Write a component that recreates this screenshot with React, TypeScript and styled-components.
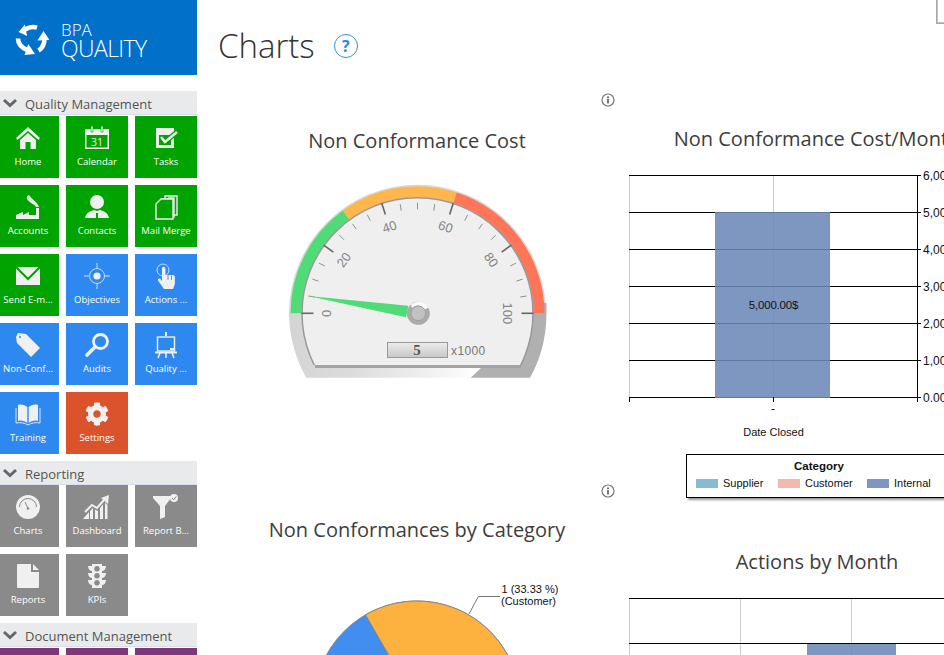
import React from "react";
import styled, { createGlobalStyle } from "styled-components";
import { FaCog } from "react-icons/fa";

const Global = createGlobalStyle`
  html, body { margin: 0; padding: 0; background: #fff; overflow: hidden; }
  #root { width: 944px; height: 655px; overflow: hidden; }
  * { box-sizing: border-box; }
`;

const Page = styled.div`
  position: relative;
  display: flex;
  width: 944px;
  height: 655px;
  overflow: hidden;
  font-family: "Open Sans", "Noto Sans", sans-serif;
`;
const CornerBox = styled.div`
  position: absolute;
  top: -2px;
  left: 936px;
  width: 20px;
  height: 26px;
  border: 1px solid #a8a8a8;
  box-shadow: inset 0 0 0 1px #c4c4c4;
`;
const Sidebar = styled.aside`
  flex: 0 0 197px;
  width: 197px;
  height: 655px;
  overflow: hidden;
`;
const Logo = styled.div`
  height: 75px;
  background: #0070c9;
  display: flex;
  align-items: center;
  padding-left: 15px;
  gap: 12px;
  color: #fff;
  margin-bottom: 16px;
`;
const LogoText = styled.div`
  display: flex;
  flex-direction: column;
  font-weight: 300;
  margin-top: 5px;
`;
const LogoTop = styled.span`
  font-size: 17px;
  line-height: 16px;
`;
const LogoBottom = styled.span`
  font-size: 23px;
  line-height: 20px;
  letter-spacing: -0.6px;
`;
const SectionHead = styled.div<{ $flush?: boolean }>`
  height: 24px;
  background: #e9eaec;
  border-bottom: 1px solid #dcdcf0;
  display: flex;
  align-items: center;
  padding-left: 2px;
  gap: 7px;
  margin-bottom: ${(p) => (p.$flush ? 0 : 1)}px;
  font-size: 13px;
  color: #555;
`;
const SectionName = styled.span`
  padding-top: 2px;
`;
const TileGrid = styled.div`
  display: grid;
  grid-template-columns: repeat(3, 62px);
  grid-auto-rows: 62px;
  gap: 7px;
  margin-left: -3px;
  margin-bottom: 7px;
`;
const Tile = styled.div<{ $tone: string }>`
  --tile: ${(p) => p.$tone};
  background: var(--tile);
  display: flex;
  flex-direction: column;
  align-items: center;
  padding-top: 8px;
  color: #f0f0f0;
`;
const IconSlot = styled.div`
  width: 28px;
  height: 28px;
  display: flex;
  align-items: center;
  justify-content: center;
`;
const TileLabel = styled.span`
  margin-top: 3px;
  font-size: 9.5px;
  line-height: 14px;
  white-space: nowrap;
  color: #fff;
`;
const Main = styled.main`
  flex: 1;
  min-width: 0;
  height: 655px;
  overflow: hidden;
  padding-left: 20px;
`;
const Header = styled.header`
  height: 75px;
  display: flex;
  align-items: center;
  padding: 17px 0 0 1px;
  gap: 19px;
`;
const PageTitle = styled.h1`
  margin: 0;
  font-size: 33px;
  line-height: 40px;
  font-weight: 300;
  color: #333;
`;
const Help = styled.div`
  width: 24px;
  height: 24px;
  border: 1.5px solid #3a8fd8;
  border-radius: 50%;
  display: flex;
  align-items: center;
  justify-content: center;
  color: #2f86d2;
  font-size: 16px;
  font-weight: 700;
`;
const Columns = styled.div`
  display: flex;
  width: 800px;
`;
const Column = styled.div`
  flex: 0 0 400px;
  width: 400px;
`;
const Card = styled.section<{ $height?: number }>`
  height: ${(p) => (p.$height ? `${p.$height}px` : "auto")};
`;
const InfoRow = styled.div`
  display: flex;
  justify-content: flex-end;
  padding: 18px 2px 0 0;
  height: 32px;
  color: #777;
`;
const ChartTitle = styled.h2<{ $top: number }>`
  margin: ${(p) => p.$top}px 0 0;
  font-size: 20px;
  line-height: 30px;
  font-weight: 400;
  text-align: center;
  white-space: nowrap;
  color: #3d3d3d;
`;
const ChartSvg = styled.svg<{ $top: number; $h: number }>`
  display: block;
  width: 400px;
  height: ${(p) => p.$h}px;
  margin-top: ${(p) => p.$top}px;
  font-family: "Liberation Sans", Arial, sans-serif;
`;
const Legend = styled.div`
  margin: 9px 0 0 69px;
  width: 266px;
  height: 44px;
  border: 1px solid #000;
  box-shadow: 2px 2px 2px #999;
  font-family: "Liberation Sans", Arial, sans-serif;
  font-size: 11px;
  color: #111;
  padding-top: 4px;
`;
const LegendTitle = styled.div`
  font-weight: 700;
  font-size: 11.5px;
  text-align: center;
  line-height: 14px;
  margin-bottom: 3px;
`;
const LegendItems = styled.div`
  display: flex;
  padding-left: 9px;
`;
const LegendItem = styled.div<{ $w: number }>`
  display: flex;
  align-items: center;
  gap: 5px;
  width: ${(p) => p.$w}px;
  line-height: 14px;
`;
const Swatch = styled.span<{ $c: string }>`
  width: 22px;
  height: 9px;
  background: ${(p) => p.$c};
`;

const W = "#f0f0f0";
const icons: Record<string, React.ReactNode> = {
  home: (
    <svg width="28" height="28" viewBox="0 0 28 28" fill={W}>
      <path d="M14 3 L26 14 L24.5 16 L14 7 L3.5 16 L2 14 Z" />
      <path d="M6 16 L14 9 L22 16 V25 H16.5 V18 H11.5 V25 H6 Z" />
    </svg>
  ),
  calendar: (
    <svg width="28" height="28" viewBox="0 0 28 28">
      <path fillRule="evenodd" fill={W} d="M2 5H26V25H2Z M3.5 11H24.5V23.5H3.5Z" />
      <rect x="8" y="2" width="2" height="6" fill={W} stroke="var(--tile)" strokeWidth=".6" />
      <rect x="18" y="2" width="2" height="6" fill={W} stroke="var(--tile)" strokeWidth=".6" />
      <text x="14" y="21.5" textAnchor="middle" fontSize="10.5" fill={W} fontFamily="Open Sans">31</text>
    </svg>
  ),
  tasks: (
    <svg width="28" height="28" viewBox="0 0 28 28">
      <path fillRule="evenodd" fill={W} d="M4 4H22V24H4Z M7 11H19V21H7Z" />
      <path d="M9 13 L13 18 L25 8" fill="none" stroke="var(--tile)" strokeWidth="5" />
      <path d="M9 13 L13 18 L25 8" fill="none" stroke={W} strokeWidth="2.4" />
    </svg>
  ),
  accounts: (
    <svg width="28" height="28" viewBox="0 0 28 28" fill={W}>
      <path d="M2 26 V22 L9 19 V22 L15 19 V22 H22 V15 H25 V26 Z" />
      <path d="M22 14 C21 11 15 10 13 6 C12 3 15 1 16 3 C17 6 23 8 25 14 Z" />
    </svg>
  ),
  contacts: (
    <svg width="28" height="28" viewBox="0 0 28 28" fill={W}>
      <circle cx="14" cy="9" r="7" />
      <path d="M2 25 C3 20 7 18 11 17 L14 18 L17 17 C21 18 25 20 26 25 Z" />
      <rect x="13" y="20" width="2" height="5" fill="var(--tile)" />
    </svg>
  ),
  merge: (
    <svg width="28" height="28" viewBox="0 0 28 28" fill="none" stroke={W} strokeWidth="1.4">
      <path d="M13 5 V3 H25 V22 H22" />
      <path d="M9 6 H17 V5 H22 V24 H17" />
      <path d="M4 11 L9 6 H21 V26 H4 Z" fill="var(--tile)" />
    </svg>
  ),
  mail: (
    <svg width="28" height="28" viewBox="0 0 28 28">
      <rect x="2" y="5" width="24" height="18" fill={W} />
      <path d="M2 5 L14 17 L26 5" fill="none" stroke="var(--tile)" strokeWidth="2" />
    </svg>
  ),
  objectives: (
    <svg width="28" height="28" viewBox="0 0 28 28" fill="none" stroke="#c7ddf9" strokeWidth="1">
      <circle cx="14" cy="14" r="7.5" />
      <circle cx="14" cy="14" r="3.6" fill={W} stroke="none" />
      <path d="M14 1 V7 M14 21 V27 M1 14 H7 M21 14 H27" />
    </svg>
  ),
  actions: (
    <svg width="28" height="28" viewBox="0 0 28 28">
      <circle cx="11" cy="8" r="6" fill="none" stroke="#c7ddf9" strokeWidth="1" />
      <path fill={W} d="M10 6.5 a1.7 1.7 0 0 1 3.4 0 V13 h7.5 c1.5 0 2 1 2 2.5 V22 L21 27 H12 L6 18.5 C5.5 17 7 16 8.5 17 L10 19 Z" />
      <path d="M16 13 V18 M19.5 13.5 V18" stroke="var(--tile)" strokeWidth=".8" />
    </svg>
  ),
  tag: (
    <svg width="28" height="28" viewBox="0 0 28 28" fill={W}>
      <path d="M2 6 L4 2 L12 3 L26 17 L17 26 L3 12 Z" />
      <circle cx="6" cy="6" r="1" fill="var(--tile)" />
    </svg>
  ),
  audits: (
    <svg width="28" height="28" viewBox="0 0 28 28" fill="none" stroke={W}>
      <circle cx="17.5" cy="10.5" r="7" strokeWidth="2.8" />
      <path d="M12 16 L4 24" strokeWidth="3.6" strokeLinecap="round" />
    </svg>
  ),
  easel: (
    <svg width="28" height="28" viewBox="0 0 28 28" fill="none" stroke={W}>
      <path d="M14 1 V5" strokeWidth="2" />
      <rect x="5.5" y="6" width="17" height="14" strokeWidth="1.4" />
      <rect x="18" y="17" width="4" height="2" fill={W} stroke="none" />
      <path d="M3 21.5 H25" strokeWidth="2" />
      <path d="M8 22 L6 27 M14 22 V27 M20 22 L22 27" strokeWidth="1.5" />
    </svg>
  ),
  book: (
    <svg width="28" height="28" viewBox="0 0 28 28">
      <path fill={W} d="M13.3 7 C11 5 7 4 4 5 V21 C7 20 11 21 13.3 23 Z" />
      <path fill={W} d="M14.7 7 C17 5 21 4 24 5 V21 C21 20 17 21 14.7 23 Z" />
      <path fill="none" stroke={W} strokeWidth=".9" d="M2 8 V23 C6 22 11 23 14 25 C17 23 22 22 26 23 V8" />
    </svg>
  ),
  gear: <FaCog size={24} color={W} />,
  gauge: (
    <svg width="28" height="28" viewBox="0 0 28 28">
      <circle cx="14" cy="14" r="12" fill={W} />
      <path d="M5.5 14 A8.5 8.5 0 0 1 22.5 14" fill="none" stroke="var(--tile)" strokeWidth="1" />
      <path d="M11 9 L14 15.5" stroke="var(--tile)" strokeWidth="1" />
      <circle cx="14" cy="15.5" r="1.3" fill="var(--tile)" />
    </svg>
  ),
  dashboard: (
    <svg width="28" height="28" viewBox="0 0 28 28" fill={W}>
      <path d="M2 19 L9 12 L14 15 L21 7" fill="none" stroke={W} strokeWidth="2" />
      <path d="M26 2 L25 11 L18 5 Z" />
      <path d="M0 26 L6 19 V26 Z M7 26 V18 L10 15 V26 Z M12 26 V16.5 L15 18 V26 Z M17 26 V15 L20 11.5 V26 Z M22 26 V9.5 L24.5 12 V26 Z" />
    </svg>
  ),
  funnel: (
    <svg width="28" height="28" viewBox="0 0 28 28" fill={W}>
      <path d="M1 3 H19 V5 L13 13 V24 L8 26 V13 L1 5 Z" />
      <circle cx="22" cy="5" r="4" />
      <path d="M20 5 L21.7 6.8 L24.2 3.4" fill="none" stroke="var(--tile)" strokeWidth="1" />
    </svg>
  ),
  report: (
    <svg width="28" height="28" viewBox="0 0 28 28" fill={W}>
      <path d="M3 3 Q3 2 4 2 H17 V10 H25 V25 Q25 26 24 26 H4 Q3 26 3 25 Z" />
      <path d="M19 2 L25 8 H19 Z" />
    </svg>
  ),
  kpi: (
    <svg width="28" height="28" viewBox="0 0 28 28">
      <path fillRule="evenodd" fill={W} d="M9 2 H19 V4 L23 4 C23 7 21 9 19 9 V11 H23 C23 14 21 16 19 16 V18 H23 C23 21 21 23 19 23 V26 H9 V23 C7 23 5 21 5 18 H9 V16 C7 16 5 14 5 11 H9 V9 C7 9 5 7 5 4 H9 Z M14 4 a2.8 2.8 0 1 0 .01 0 Z M14 11 a2.8 2.8 0 1 0 .01 0 Z M14 18 a2.8 2.8 0 1 0 .01 0 Z" />
    </svg>
  ),
};

type T = { label: string; icon: string; tone: string };
const G = "#00a300";
const B = "#2d89ef";
const O = "#da532c";
const S = "#8a8a8a";
const P = "#7e3878";
const quality: T[] = [
  { label: "Home", icon: "home", tone: G },
  { label: "Calendar", icon: "calendar", tone: G },
  { label: "Tasks", icon: "tasks", tone: G },
  { label: "Accounts", icon: "accounts", tone: G },
  { label: "Contacts", icon: "contacts", tone: G },
  { label: "Mail Merge", icon: "merge", tone: G },
  { label: "Send E-m...", icon: "mail", tone: G },
  { label: "Objectives", icon: "objectives", tone: B },
  { label: "Actions ...", icon: "actions", tone: B },
  { label: "Non-Conf...", icon: "tag", tone: B },
  { label: "Audits", icon: "audits", tone: B },
  { label: "Quality ...", icon: "easel", tone: B },
  { label: "Training", icon: "book", tone: B },
  { label: "Settings", icon: "gear", tone: O },
];
const reporting: T[] = [
  { label: "Charts", icon: "gauge", tone: S },
  { label: "Dashboard", icon: "dashboard", tone: S },
  { label: "Report B...", icon: "funnel", tone: S },
  { label: "Reports", icon: "report", tone: S },
  { label: "KPIs", icon: "kpi", tone: S },
];
const documents: T[] = [
  { label: "", icon: "", tone: P },
  { label: "", icon: "", tone: P },
  { label: "", icon: "", tone: P },
];

const Chevron = () => (
  <svg width="16" height="12" viewBox="0 0 16 12">
    <path d="M2 3 L8 8.5 L14 3" fill="none" stroke="#666" strokeWidth="3" />
  </svg>
);

const Section = ({ title, tiles, flush }: { title: string; tiles: T[]; flush?: boolean }) => (
  <>
    <SectionHead $flush={flush}>
      <Chevron />
      <SectionName>{title}</SectionName>
    </SectionHead>
    <TileGrid>
      {tiles.map((t, i) => (
        <Tile key={i} $tone={t.tone}>
          <IconSlot>{icons[t.icon]}</IconSlot>
          <TileLabel>{t.label}</TileLabel>
        </Tile>
      ))}
    </TileGrid>
  </>
);

const InfoIcon = () => (
  <svg width="14" height="14" viewBox="0 0 14 14">
    <circle cx="7" cy="7" r="6" fill="none" stroke="#777" strokeWidth="1.2" />
    <circle cx="7" cy="4.2" r="1" fill="#666" />
    <rect x="6.1" y="6" width="1.8" height="4.5" fill="#666" />
  </svg>
);

const LogoMark = () => (
  <svg width="34" height="34" viewBox="0 0 34 34" fill="none" stroke="#fff" strokeWidth="4.6">
    <path d="M22 6.6 C18 5.4 14 6 10 8.5" />
    <path fill="#fff" stroke="none" d="M3.5 11 L10 3.6 L12 15 Z" />
    <path d="M3 17.5 C3 22 6 26.5 13 29.5" />
    <path fill="#fff" stroke="none" d="M20 33 L13.3 23 L9.5 34 Z" />
    <path d="M23.5 29.5 C27 27.5 29.5 24 29.5 17" />
    <path fill="#fff" stroke="none" d="M28.5 10 L22.5 19.5 L34.5 19 Z" />
  </svg>
);

const CX = 417.5;
const CY = 313.3;
const pol = (v: number, r: number) => {
  const a = Math.PI - (v / 100) * Math.PI;
  return [CX + r * Math.cos(a), CY - r * Math.sin(a)];
};
const band = (a: number, b: number, r0: number, r1: number) => {
  const [x0, y0] = pol(a, r1);
  const [x1, y1] = pol(b, r1);
  const [x2, y2] = pol(b, r0);
  const [x3, y3] = pol(a, r0);
  return `M${x0} ${y0} A${r1} ${r1} 0 0 1 ${x1} ${y1} L${x2} ${y2} A${r0} ${r0} 0 0 0 ${x3} ${y3} Z`;
};
const ticks = Array.from({ length: 21 }, (_, i) => i * 5);

const Gauge = () => (
  <ChartSvg $top={14} $h={215} viewBox="217 170 400 215">
    <defs>
      <linearGradient id="lower" x1="0" y1="0" x2="1" y2="0">
        <stop offset="0" stopColor="#d4d4d4" />
        <stop offset=".25" stopColor="#dcdcdc" />
        <stop offset=".75" stopColor="#ffffff" />
      </linearGradient>
      <linearGradient id="readout" x1="0" y1="0" x2="0" y2="1">
        <stop offset="0" stopColor="#ececec" />
        <stop offset="1" stopColor="#c8c8c8" />
      </linearGradient>
      <clipPath id="lowClip"><rect x="280" y="313" width="280" height="64.7" /></clipPath>
      <clipPath id="faceClip"><rect x="280" y="180" width="280" height="185" /></clipPath>
    </defs>
    <path d={`M${CX - 128.5} ${CY} A128.5 128.5 0 0 1 ${CX + 128.5} ${CY} Z`} fill="#d8d8d8" />
    <g clipPath="url(#lowClip)">
      <circle cx={CX} cy={CY} r="128.5" fill="url(#lower)" />
    </g>
    <path d="M537 303 H546.5 V315 C546 340 540 360 530 377.7 H470.7 L481 368 H520 V320 Z" fill="#b0b0b0" />
    <path d={band(0, 30, 116, 127)} fill="#4fdc76" />
    <path d={band(30, 60, 116, 127)} fill="#ffb74d" />
    <path d={band(60, 100, 116, 127)} fill="#ff7558" />
    <g clipPath="url(#faceClip)">
      <circle cx={CX} cy={CY} r="115.5" fill="#efefef" stroke="#999" strokeWidth="1.5" />
    </g>
    <rect x="315" y="365" width="206" height="3" fill="#a3a3a3" />
    {ticks.map((v) => {
      const major = v % 20 === 0;
      const [x0, y0] = pol(v, major ? 116 : 110.5);
      const [x1, y1] = pol(v, 104);
      return (
        <line key={v} x1={x0} y1={y0} x2={x1} y2={y1} stroke={major ? "#666" : "#777"} strokeWidth={major ? 1.6 : 0.8} />
      );
    })}
    {[0, 20, 40, 60, 80, 100].map((v) => {
      const [x, y] = pol(v, v === 100 ? 90 : 91);
      return (
        <text
          key={v}
          x={x}
          y={y}
          fontSize="13"
          fill="#858585"
          textAnchor="middle"
          dominantBaseline="central"
          transform={`rotate(${(v - 50) * 1.8} ${x} ${y})`}
        >
          {v}
        </text>
      );
    })}
    <path d="M308.3 296 L408.3 305.7 L406 317.3 Z" fill="#4fdc76" />
    <circle cx="418.3" cy="313.3" r="11.5" fill="#aaa" />
    <path d="M411 304.5 A11.5 11.5 0 0 1 428.5 307.5 L424 310 A7 7 0 0 0 412 308 Z" fill="#fafafa" />
    <circle cx="418.3" cy="313.3" r="7.3" fill="#c2c2c2" stroke="#a0a0a0" />
    <rect x="387.5" y="342.5" width="60" height="15" fill="url(#readout)" stroke="#999" />
    <text x="417" y="355" textAnchor="middle" fontSize="15" fontWeight="700" fill="#555" fontFamily="Liberation Serif">5</text>
    <text x="451" y="355" fontSize="12" fill="#777" letterSpacing=".4">x1000</text>
  </ChartSvg>
);

const BarChart = () => {
  const ys = [175.5, 212.5, 249.5, 286.5, 323.5, 360.5, 397.5];
  const labels = ["6,000.00", "5,000.00", "4,000.00", "3,000.00", "2,000.00", "1,000.00", "0.00"];
  return (
    <ChartSvg $top={11} $h={280} viewBox="617 165 400 280">
      <path d="M629.5 175 V397 M773.5 175 V397" stroke="#ccc" />
      <rect x="715" y="212" width="115" height="185" fill="#7e97c0" />
      <path d="M773.5 212 V397" stroke="#7891ba" />
      {ys.map((y, i) => (
        <React.Fragment key={y}>
          <line x1="629" x2="921" y1={y} y2={y} stroke="#000" />
          <line x1="715" x2="830" y1={y} y2={y} stroke="#6078a0" strokeOpacity={i ? 1 : 0} />
          <text x="923" y={y + 4} fontSize="12" fill="#111">{labels[i]}</text>
        </React.Fragment>
      ))}
      <path d="M917.5 175 V402 M629.5 397 V402 M773.5 397 V402" stroke="#000" />
      <text x="773.5" y="309" textAnchor="middle" fontSize="11.5" fill="#111" letterSpacing="-.2">5,000.00$</text>
      <text x="773" y="413" textAnchor="middle" fontSize="12" fill="#111">-</text>
      <text x="773.5" y="436" textAnchor="middle" fontSize="11" fill="#111">Date Closed</text>
    </ChartSvg>
  );
};

const ActionsChart = () => (
  <ChartSvg $top={13} $h={120} viewBox="617 590 400 120">
    <path d="M629.5 598 V710 M740.5 598 V710 M851.5 598 V710" stroke="#ccc" />
    <rect x="807" y="643" width="89" height="70" fill="#7e97c0" />
    <path d="M851.5 643 V710" stroke="#7891ba" />
    <path d="M629 598.5 H960 M629 643.5 H960" stroke="#000" />
  </ChartSvg>
);

const Pie = () => (
  <ChartSvg $top={0} $h={220} viewBox="217 545 400 220">
    <circle cx="417" cy="704" r="103" fill="#428df0" stroke="#888" />
    <path d="M417 704 L365.5 614.8 A103 103 0 0 1 520 704 Z" fill="#fdb13f" stroke="#888" />
    <path d="M469 614 L478.3 596.5 H500" fill="none" stroke="#777" />
    <text x="501.5" y="593" fontSize="11" fill="#111">1 (33.33 %)</text>
    <text x="501" y="605" fontSize="11" fill="#111">(Customer)</text>
  </ChartSvg>
);

export default function App() {
  return (
    <Page>
      <Global />
      <Sidebar>
        <Logo>
          <LogoMark />
          <LogoText>
            <LogoTop>BPA</LogoTop>
            <LogoBottom>QUALITY</LogoBottom>
          </LogoText>
        </Logo>
        <Section title="Quality Management" tiles={quality} />
        <Section title="Reporting" tiles={reporting} flush />
        <Section title="Document Management" tiles={documents} />
      </Sidebar>
      <Main>
        <Header>
          <PageTitle>Charts</PageTitle>
          <Help>?</Help>
        </Header>
        <Columns>
          <Column>
            <Card $height={391}>
              <InfoRow><InfoIcon /></InfoRow>
              <ChartTitle $top={19}>Non Conformance Cost</ChartTitle>
              <Gauge />
            </Card>
            <Card>
              <InfoRow><InfoIcon /></InfoRow>
              <ChartTitle $top={17}>Non Conformances by Category</ChartTitle>
              <Pie />
            </Card>
          </Column>
          <Column>
            <ChartTitle $top={49}>Non Conformance Cost/Month</ChartTitle>
            <BarChart />
            <Legend>
              <LegendTitle>Category</LegendTitle>
              <LegendItems>
                <LegendItem $w={82}><Swatch $c="#87bbd4" />Supplier</LegendItem>
                <LegendItem $w={89}><Swatch $c="#f2b9ac" />Customer</LegendItem>
                <LegendItem $w={80}><Swatch $c="#7e97c0" />Internal</LegendItem>
              </LegendItems>
            </Legend>
            <ChartTitle $top={49}>Actions by Month</ChartTitle>
            <ActionsChart />
          </Column>
        </Columns>
      </Main>
      <CornerBox />
    </Page>
  );
}
